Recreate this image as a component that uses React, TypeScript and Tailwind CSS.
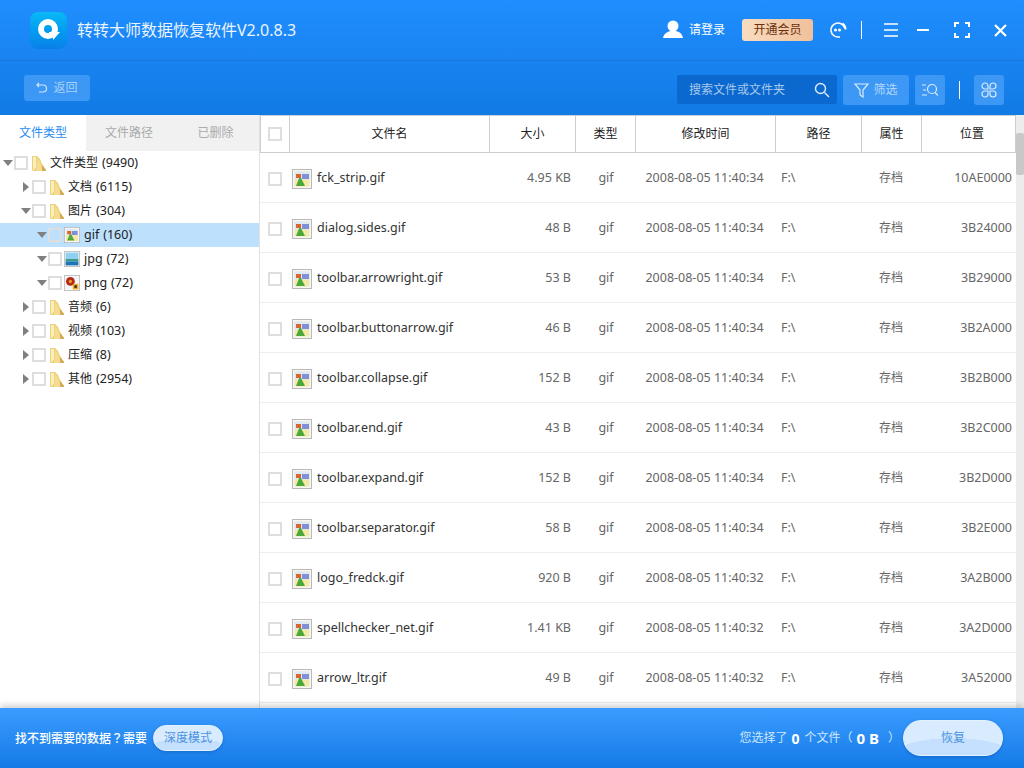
const font = "font-['Noto_Sans','Noto_Sans_CJK_SC',sans-serif]";

const treeRows = [
  { name: "文件类型", count: "(9490)", indent: "pl-[3px]", open: true, icon: "folder" },
  { name: "文档", count: "(6115)", indent: "pl-[21px]", open: false, icon: "folder" },
  { name: "图片", count: "(304)", indent: "pl-[21px]", open: true, icon: "folder" },
  { name: "gif", count: "(160)", indent: "pl-[37px]", open: true, icon: "gif", selected: true },
  { name: "jpg", count: "(72)", indent: "pl-[37px]", open: true, icon: "jpg" },
  { name: "png", count: "(72)", indent: "pl-[37px]", open: true, icon: "png" },
  { name: "音频", count: "(6)", indent: "pl-[21px]", open: false, icon: "folder" },
  { name: "视频", count: "(103)", indent: "pl-[21px]", open: false, icon: "folder" },
  { name: "压缩", count: "(8)", indent: "pl-[21px]", open: false, icon: "folder" },
  { name: "其他", count: "(2954)", indent: "pl-[21px]", open: false, icon: "folder" },
];

const files = [
  { name: "fck_strip.gif", size: "4.95 KB", time: "2008-08-05 11:40:34", pos: "10AE0000" },
  { name: "dialog.sides.gif", size: "48 B", time: "2008-08-05 11:40:34", pos: "3B24000" },
  { name: "toolbar.arrowright.gif", size: "53 B", time: "2008-08-05 11:40:34", pos: "3B29000" },
  { name: "toolbar.buttonarrow.gif", size: "46 B", time: "2008-08-05 11:40:34", pos: "3B2A000" },
  { name: "toolbar.collapse.gif", size: "152 B", time: "2008-08-05 11:40:34", pos: "3B2B000" },
  { name: "toolbar.end.gif", size: "43 B", time: "2008-08-05 11:40:34", pos: "3B2C000" },
  { name: "toolbar.expand.gif", size: "152 B", time: "2008-08-05 11:40:34", pos: "3B2D000" },
  { name: "toolbar.separator.gif", size: "58 B", time: "2008-08-05 11:40:34", pos: "3B2E000" },
  { name: "logo_fredck.gif", size: "920 B", time: "2008-08-05 11:40:32", pos: "3A2B000" },
  { name: "spellchecker_net.gif", size: "1.41 KB", time: "2008-08-05 11:40:32", pos: "3A2D000" },
  { name: "arrow_ltr.gif", size: "49 B", time: "2008-08-05 11:40:32", pos: "3A52000" },
];

function Check({ className = "" }: { className?: string }) {
  return <span className={"block w-[14px] h-[14px] shrink-0 border-2 border-[#dedede] " + className} />;
}

function FolderIcon() {
  return (
    <svg width="16" height="17" viewBox="0 0 16 17" className="shrink-0">
      <path d="M1 1h5l1 1 2 2 2 5 4 6v1H2l-1-1z" fill="#eccf78" />
      <path d="M2 2h3v10l-2 3H2z" fill="#fbf0bd" />
      <path d="M6 3l2 2 2 5 1 5v1H5z" fill="#f4dd90" />
      <path d="M11 10l4 5v1h-4z" fill="#d3aa58" />
    </svg>
  );
}

function GifIcon({ big = false }: { big?: boolean }) {
  return (
    <svg width={big ? 20 : 16} height={big ? 20 : 16} viewBox="0 0 20 20" className="shrink-0">
      <rect x="0.5" y="0.5" width="19" height="19" fill="#f6f6f6" stroke="#b9b9b9" />
      <rect x="2.5" y="2.5" width="15" height="15" fill="#f3e9a8" />
      <rect x="2.5" y="2.5" width="15" height="8" fill="#dfe8f5" />
      <rect x="10" y="5" width="7" height="5" fill="#7f8fd8" />
      <path d="M4 17l4-10 5 10z" fill="#4da83a" />
      <rect x="4" y="5" width="5" height="4" fill="#d9662a" />
    </svg>
  );
}

function JpgIcon() {
  return (
    <svg width="16" height="16" viewBox="0 0 20 20" className="shrink-0">
      <rect x="0.5" y="0.5" width="19" height="19" fill="#f6f6f6" stroke="#b9b9b9" />
      <rect x="2" y="2" width="16" height="8" fill="#8fd0f2" />
      <rect x="2" y="10" width="16" height="3" fill="#3d9a8c" />
      <rect x="2" y="13" width="16" height="5" fill="#1b75b5" />
    </svg>
  );
}

function PngIcon() {
  return (
    <svg width="16" height="16" viewBox="0 0 20 20" className="shrink-0">
      <rect x="0.5" y="0.5" width="19" height="19" fill="#f6f6f6" stroke="#b9b9b9" />
      <circle cx="8" cy="8" r="5.5" fill="#b5291c" />
      <circle cx="8" cy="8" r="2" fill="#e8a02a" />
      <rect x="11" y="11" width="7" height="7" fill="#f0a81e" />
      <rect x="13" y="13" width="3" height="3" fill="#222" />
    </svg>
  );
}

function TreeRow({ row }: { row: (typeof treeRows)[number] }) {
  return (
    <div className={"flex items-center h-6 " + row.indent + (row.selected ? " bg-[#bde0fd]" : "")}>
      {row.open ? (
        <svg width="10" height="6" viewBox="0 0 10 6" className="shrink-0">
          <path d="M0 0h10L5 6z" fill="#808080" />
        </svg>
      ) : (
        <svg width="10" height="10" viewBox="0 0 10 10" className="shrink-0">
          <path d="M2 0l6 5-6 5z" fill="#808080" />
        </svg>
      )}
      <Check className={"ml-[1px] " + (row.selected ? "mr-[2px] border-[#cfd8e0]" : row.icon === "folder" ? "mr-[3px] bg-white" : "mr-[2px] bg-white")} />
      {row.icon === "folder" && <FolderIcon />}
      {row.icon === "gif" && <GifIcon />}
      {row.icon === "jpg" && <JpgIcon />}
      {row.icon === "png" && <PngIcon />}
      <span className={"text-[#222] whitespace-nowrap " + (row.icon === "folder" ? "ml-[3px] text-[12px]" : "ml-[4px] text-[12.5px]")}>{row.name}</span>
      <span className="ml-[4px] text-[12.5px] text-[#222] whitespace-nowrap">{row.count}</span>
    </div>
  );
}

function HeaderCell({ width, label, className = "" }: { width: string; label: string; className?: string }) {
  return (
    <div className={"flex items-center justify-center border-r border-[#c9ced3] text-[12px] text-[#222] shrink-0 " + width + " " + className}>
      {label}
    </div>
  );
}

export default function App() {
  return (
    <div className={"w-[1024px] h-[768px] overflow-hidden flex flex-col bg-white " + font}>
      <div className="h-[115px] shrink-0 bg-gradient-to-b from-[#208eff] to-[#117ae4] text-white">
        <div className="h-[61px] flex items-center border-b border-[#1a78dc] pl-[30px] pr-[17px]">
          <div className="w-[37px] h-[37px] rounded-[8px] bg-gradient-to-b from-[#0ab8f5] to-[#0a80e8] flex items-center justify-center">
            <svg width="24" height="24" viewBox="0 0 24 24">
              <circle cx="11" cy="11" r="7" fill="none" stroke="#fff" strokeWidth="6" />
              <path d="M12 14h11l-7 8v-4h-3z" fill="#fff" />
            </svg>
          </div>
          <span className="ml-[10px] text-[16px] whitespace-nowrap text-[#eaf4ff]">转转大师数据恢复软件V2.0.8.3</span>
          <div className="ml-auto flex items-center">
            <svg width="20" height="20" viewBox="0 0 20 20">
              <circle cx="10" cy="6" r="5.5" fill="#fff" />
              <path d="M0 18c1-5 5-6 7-7h6c3 1 6 2 7 7z" fill="#fff" />
            </svg>
            <span className="ml-[6px] text-[12px]">请登录</span>
            <span className="ml-[17px] w-[71px] h-[22px] rounded-[3px] bg-gradient-to-r from-[#f7dcc0] to-[#f0c09a] text-[#6b2f0c] text-[12px] flex items-center justify-center">
              开通会员
            </span>
            <svg width="18" height="18" viewBox="0 0 18 18" className="ml-4" fill="none" stroke="#fff" strokeWidth="1.6">
              <path d="M15.5 6.5A7 7 0 1 0 9 16h2" />
              <path d="M13.5 2.5a7 7 0 0 1 3 6" strokeWidth="2" />
              <circle cx="6.5" cy="9" r="0.7" fill="#fff" />
              <circle cx="10.5" cy="9" r="0.7" fill="#fff" />
            </svg>
            <span className="ml-[14px] w-[1px] h-[18px] bg-white" />
            <svg width="16" height="14" viewBox="0 0 16 14" className="ml-[21px]" stroke="#fff" strokeWidth="1.6">
              <path d="M1 1h14M1 7h14M1 13h14" />
            </svg>
            <svg width="12" height="2" viewBox="0 0 12 2" className="ml-[18px]" stroke="#fff" strokeWidth="2">
              <path d="M0 1h12" />
            </svg>
            <svg width="16" height="16" viewBox="0 0 16 16" className="ml-[25px]" fill="none" stroke="#fff" strokeWidth="2">
              <path d="M1 5V1h4M11 1h4v4M15 11v4h-4M5 15H1v-4" />
            </svg>
            <svg width="13" height="13" viewBox="0 0 13 13" className="ml-[24px]" stroke="#fff" strokeWidth="2.2">
              <path d="M1 1l11 11M12 1L1 12" />
            </svg>
          </div>
        </div>
        <div className="h-[54px] flex items-start pt-[14px] pl-6 pr-5">
          <div className="w-[66px] h-[26px] rounded-[3px] bg-[#3c97f5] flex items-center justify-center text-[12px] text-[#a9d2fb]">
            <svg width="12" height="12" viewBox="0 0 12 12" fill="none" stroke="#cfe5fc" strokeWidth="1.2" className="mr-[5px]">
              <path d="M3 1L1 3l2 2M1 3h6a3.5 3.5 0 0 1 0 7H3" />
            </svg>
            返回
          </div>
          <div className="ml-auto w-[160px] h-[29px] rounded-[2px] bg-[#0a68cf] flex items-center pl-3 pr-[7px] text-[12px] text-[#a9c9ec]">
            搜索文件或文件夹
            <svg width="16" height="16" viewBox="0 0 16 16" fill="none" stroke="#dcecfc" strokeWidth="1.4" className="ml-auto">
              <circle cx="6.5" cy="6.5" r="5" />
              <path d="M10.5 10.5L15 15" />
            </svg>
          </div>
          <div className="ml-[6px] w-[66px] h-[30px] rounded-[3px] bg-[#3c97f5] flex items-center justify-center text-[12px] text-[#b5d8fb]">
            <svg width="15" height="15" viewBox="0 0 15 15" fill="none" stroke="#dcecfc" strokeWidth="1.2" className="mr-1">
              <path d="M1 1h13L9 7v7l-3-2V7z" />
            </svg>
            筛选
          </div>
          <div className="ml-[6px] w-[30px] h-[30px] rounded-[3px] bg-[#3c97f5] flex items-center justify-center">
            <svg width="16" height="14" viewBox="0 0 16 14" fill="none" stroke="#dcecfc" strokeWidth="1.2">
              <path d="M0 2h4M1 7h3M0 12h5" />
              <circle cx="10" cy="6" r="4.5" />
              <path d="M13 9.5l3 3" />
            </svg>
          </div>
          <span className="ml-[14px] mt-[6px] w-[1px] h-[18px] bg-white" />
          <div className="ml-[14px] w-[30px] h-[30px] rounded-[3px] bg-[#3c97f5] flex items-center justify-center">
            <svg width="16" height="16" viewBox="0 0 16 16" fill="none" stroke="#dcecfc" strokeWidth="1.2">
              <path d="M7 7H4a3 3 0 1 1 3-3zM9 7V4a3 3 0 1 1 3 3zM7 9v3a3 3 0 1 1-3-3zM9 9h3a3 3 0 1 1-3 3z" />
            </svg>
          </div>
        </div>
      </div>

      <div className="flex-1 min-h-0 flex">
        <div className="w-[260px] shrink-0 border-r border-[#e2e2e2]">
          <div className="flex h-9 bg-[#f1f1f1] text-[12px] text-[#aaa]">
            <div className="w-[86px] bg-white text-[#2a8cf0] flex items-center justify-center">文件类型</div>
            <div className="w-[86px] flex items-center justify-center">文件路径</div>
            <div className="w-[87px] flex items-center justify-center">已删除</div>
          </div>
          {treeRows.map((row) => (
            <TreeRow key={row.name} row={row} />
          ))}
        </div>
        <div className="flex-1 min-w-0 flex flex-col">
          <div className="h-[38px] shrink-0 flex border-t border-l border-b border-[#c9ced3]">
            <div className="w-[29px] flex items-center justify-center pr-[1px] border-r border-[#c9ced3] shrink-0">
              <Check />
            </div>
            <HeaderCell width="w-[200px]" label="文件名" />
            <HeaderCell width="w-[86px]" label="大小" />
            <HeaderCell width="w-[60px]" label="类型" />
            <HeaderCell width="w-[140px]" label="修改时间" />
            <HeaderCell width="w-[86px]" label="路径" />
            <HeaderCell width="w-[60px]" label="属性" />
            <HeaderCell width="w-[94px]" label="位置" className="pl-[7px]" />
          </div>
          {files.map((f) => (
            <div key={f.name} className="h-[50px] shrink-0 flex items-center pt-[2px] border-b border-[#eeeeee] text-[12.5px] text-[#666]">
              <div className="w-[30px] flex justify-center pr-[1px] shrink-0">
                <Check />
              </div>
              <div className="w-[200px] flex items-center pl-[2px] shrink-0">
                <GifIcon big />
                <span className="ml-[5px] text-[#333] whitespace-nowrap">{f.name}</span>
              </div>
              <div className="w-[86px] text-right pr-[5px] shrink-0">{f.size}</div>
              <div className="w-[60px] text-center shrink-0">gif</div>
              <div className="w-[140px] text-center pr-[3px] shrink-0 whitespace-nowrap">{f.time}</div>
              <div className="w-[86px] pl-[5px] shrink-0">F:\</div>
              <div className="w-[60px] text-center pr-[2px] pb-[2px] text-[12px] shrink-0">存档</div>
              <div className="w-[94px] text-right pr-[4px] shrink-0">{f.pos}</div>
            </div>
          ))}
        </div>
        <div className="w-2 shrink-0 bg-[#ececec]">
          <div className="mt-[18px] h-[42px] bg-[#c8c8c8] rounded-[2px]" />
        </div>
      </div>

      <div className="h-[60px] shrink-0 bg-gradient-to-b from-[#3a9cff] to-[#127ae6] flex items-center pl-[15px] pr-[21px] text-white shadow-[0_-3px_6px_rgba(0,0,0,0.18)] z-10">
        <span className="text-[12px] font-medium whitespace-nowrap">
          找不到需要的数据<span className="font-['Noto_Sans_CJK_TC',sans-serif]">？</span>需要
        </span>
        <span className="ml-[6px] w-[70px] h-[26px] rounded-full bg-[radial-gradient(ellipse_60%_50%_at_50%_100%,#c4e0fe_99%,#d8ebff_100%)] border border-[#e4f1ff] shadow-[0_1px_3px_rgba(0,60,140,0.35)] text-[#4c93e0] text-[12px] flex items-center justify-center">
          深度模式
        </span>
        <div className="ml-auto flex items-center text-[12px] text-[#cfe6fe] whitespace-nowrap">
          您选择了
          <b className="ml-[4px] mr-[5px] text-[14px] text-white">0</b>
          个文件（
          <b className="ml-[4px] text-[15px] text-white">0 B</b>
          <span className="ml-[9px]">）</span>
        </div>
        <span className="ml-[3px] w-[100px] h-9 rounded-full bg-[radial-gradient(ellipse_60%_50%_at_50%_100%,#c4e0fe_99%,#d8ebff_100%)] border border-[#e4f1ff] shadow-[0_1px_3px_rgba(0,60,140,0.35)] text-[#4c93e0] text-[12px] flex items-center justify-center">
          恢复
        </span>
      </div>
    </div>
  );
}
